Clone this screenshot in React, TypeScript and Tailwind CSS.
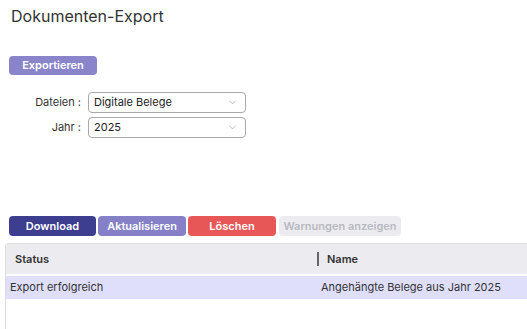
import { ChevronDown } from 'lucide-react';

const font = { fontFamily: 'Inter, "Noto Sans", sans-serif' };

function SelectBox({ value }: { value: string }) {
    return (
        <div className="flex h-[21px] w-[158px] items-center justify-between rounded-[4px] border border-[#a9a9a9] bg-white pl-[5px] pr-[7px] text-[11px] text-[#222]">
            <span>{value}</span>
            <ChevronDown className="h-[11px] w-[11px] text-[#999]" strokeWidth={1.5} />
        </div>
    );
}

export default function App() {
    return (
        <div className="h-[329px] w-[527px] overflow-hidden bg-white text-[#2b2b2b]" style={font}>
            {/* Title */}
            <h1 className="pl-[11px] pt-[4px] text-[16px] leading-[24px] text-[#333]">Dokumenten-Export</h1>

            {/* Export form */}
            <div className="mt-[23px] pl-[9px]">
                <button className="h-[19px] w-[88px] rounded-[4px] bg-[#8a85cb] text-[11px] font-semibold text-white">
                    Exportieren
                </button>
            </div>

            <div className="mt-[17px] flex flex-col gap-[4px] pl-[30px]">
                <div className="flex items-center gap-[7px]">
                    <span className="w-[51px] text-right text-[11px] text-[#333]">Dateien :</span>
                    <SelectBox value="Digitale Belege" />
                </div>
                <div className="flex items-center gap-[7px]">
                    <span className="w-[51px] text-right text-[11px] text-[#333]">Jahr :</span>
                    <SelectBox value="2025" />
                </div>
            </div>

            {/* Action buttons */}
            <div className="mt-[78px] flex gap-[2px] pl-[9px]">
                <button className="h-[20px] w-[87px] rounded-[4px] bg-[#3d3e8f] text-[11px] font-semibold text-white">
                    Download
                </button>
                <button className="h-[20px] w-[88px] rounded-[4px] bg-[#8580c8] text-[11px] font-semibold text-white">
                    Aktualisieren
                </button>
                <button className="h-[20px] w-[88px] rounded-[4px] bg-[#e85757] text-[11px] font-semibold text-white">
                    Löschen
                </button>
                <button className="ml-[1px] h-[20px] w-[122px] rounded-[4px] bg-[#ececf0] text-[11px] font-semibold text-[#b9b9c2]">
                    Warnungen anzeigen
                </button>
            </div>

            {/* Table */}
            <div className="ml-[5px] mt-[7px] h-[120px] rounded-tl-[4px] border-l border-t border-[#dcdcdc]">
                <div className="flex h-[30px] items-center bg-[#ebebf0] text-[11px] font-semibold text-[#333]">
                    <div className="w-[311px] pl-[9px]">Status</div>
                    <div className="flex items-center">
                        <span className="h-[14px] w-[2px] bg-[#666]" />
                        <span className="pl-[8px]">Name</span>
                    </div>
                </div>
                <div className="mt-[2px] flex h-[23px] items-center bg-[#dfdffb] text-[11px] text-[#333]">
                    <div className="w-[311px] pl-[4px]">Export erfolgreich</div>
                    <div className="pl-[4px]">Angehängte Belege aus Jahr 2025</div>
                </div>
            </div>
        </div>
    );
}
